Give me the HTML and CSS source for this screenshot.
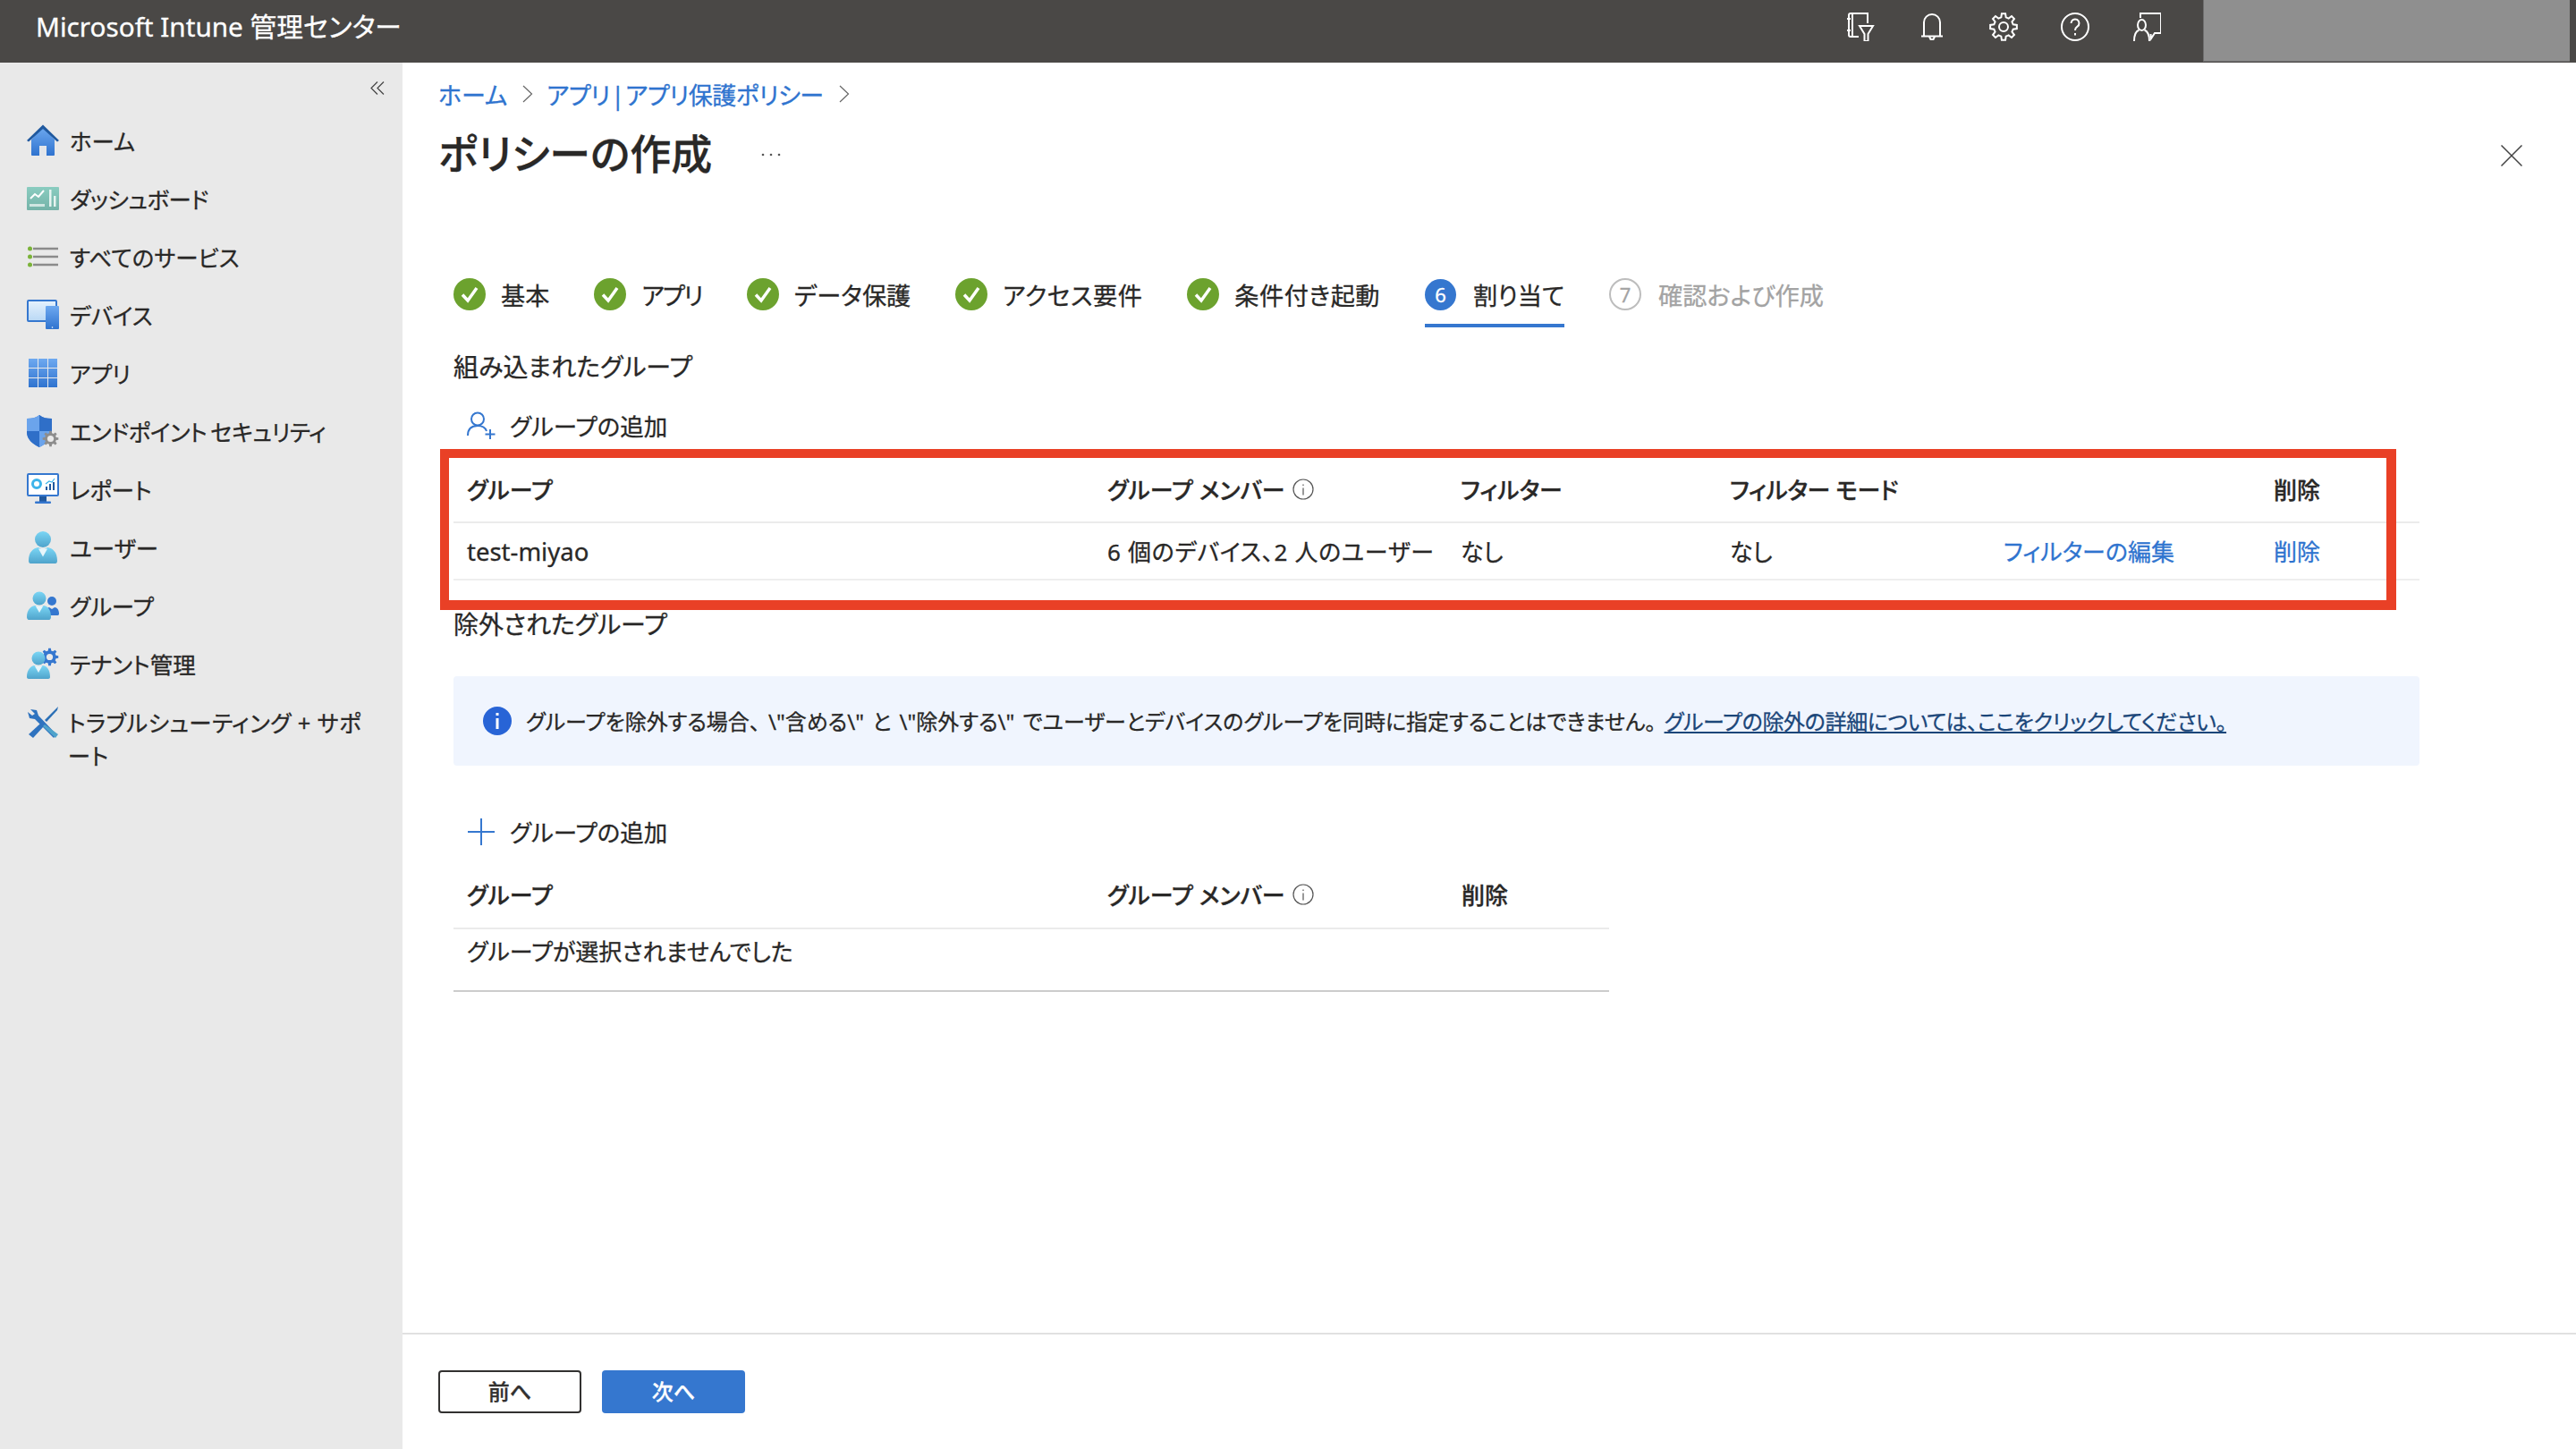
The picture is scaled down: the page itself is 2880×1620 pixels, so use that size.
FILE: index.html
```html
<!DOCTYPE html>
<html lang="ja">
<head>
<meta charset="utf-8">
<title>Microsoft Intune 管理センター</title>
<link rel="stylesheet" href="styles.css">
</head>
<body>
<header class="topbar">
  <div class="brand">Microsoft Intune 管理センター</div>
  <div class="top-icons">
    <svg class="top-icon" viewBox="0 0 32 32"><path d="M24 12V1H5a2 2 0 0 0-2 2v22a2 2 0 0 0 2 2h9M1 7h4M1 20h4M7 1v26M15 15h15l-5.500 9v8h-4v-8z"/></svg>
    <svg class="top-icon" viewBox="0 0 32 32"><path d="M7 26V11a9 9 0 0 1 18 0v15M4 26.500h24M13 27l1.500 3h3l1.500-3"/></svg>
    <svg class="top-icon" viewBox="0 0 32 32"><polygon points="13.34,5.33 13.91,1.15 18.09,1.15 18.66,5.33 21.67,6.57 25.03,4.02 27.98,6.97 25.43,10.33 26.67,13.34 30.85,13.91 30.85,18.09 26.67,18.66 25.43,21.67 27.98,25.03 25.03,27.98 21.67,25.43 18.66,26.67 18.09,30.85 13.91,30.85 13.34,26.67 10.33,25.43 6.97,27.98 4.02,25.03 6.57,21.67 5.33,18.66 1.15,18.09 1.15,13.91 5.33,13.34 6.57,10.33 4.02,6.97 6.97,4.02 10.33,6.57"/><circle cx="16" cy="16" r="5"/></svg>
    <svg class="top-icon" viewBox="0 0 32 32"><circle cx="16" cy="16" r="15"/><path d="M11.500 12a4.500 4.500 0 1 1 7 3.700c-1.800 1.200-2.500 2.200-2.500 4.300M16 23v2.500"/></svg>
    <svg class="top-icon" viewBox="0 0 32 32"><path d="M9 6V1h23v22h-7l-4 6-.5-5M2 32c0-7 1.500-11 5.500-12.500M19 32c0-7-1.500-11-5.500-12.500"/><ellipse cx="10.500" cy="14" rx="4.500" ry="6"/></svg>
  </div>
  <div class="account"></div>
</header>

<div class="shell">
  <nav class="sidebar">
    <div class="collapse">
      <svg class="collapse-icon" viewBox="0 0 16 15"><path d="M8 .5 1 7.500l7 7M15 .5l-7 7 7 7"/></svg>
    </div>
    <a class="nav-item">
      <svg class="nav-icon" viewBox="0 0 36 36">
        <defs>
          <linearGradient id="gBlue" x1="0" y1="0" x2="0" y2="1"><stop offset="0" stop-color="#6ea9f0"/><stop offset="1" stop-color="#2f73cf"/></linearGradient>
          <linearGradient id="gSky" x1="0" y1="0" x2="0" y2="1"><stop offset="0" stop-color="#7bd6f5"/><stop offset="1" stop-color="#4fa3cb"/></linearGradient>
          <linearGradient id="gScreen" x1="0" y1="0" x2="0" y2="1"><stop offset="0" stop-color="#e6f2fd"/><stop offset="1" stop-color="#b9d8f5"/></linearGradient>
          <linearGradient id="gTeal" x1="0" y1="0" x2="0" y2="1"><stop offset="0" stop-color="#8accc0"/><stop offset="1" stop-color="#74b3a8"/></linearGradient>
          <polygon id="gearShape" points="13.34,5.33 13.91,1.15 18.09,1.15 18.66,5.33 21.67,6.57 25.03,4.02 27.98,6.97 25.43,10.33 26.67,13.34 30.85,13.91 30.85,18.09 26.67,18.66 25.43,21.67 27.98,25.03 25.03,27.98 21.67,25.43 18.66,26.67 18.09,30.85 13.91,30.85 13.34,26.67 10.33,25.43 6.97,27.98 4.02,25.03 6.57,21.67 5.33,18.66 1.15,18.09 1.15,13.91 5.33,13.34 6.57,10.33 4.02,6.97 6.97,4.02 10.33,6.57"/>
        </defs>
        <path d="M5 17 18 3l13 14v17a1 1 0 0 1-1 1H6a1 1 0 0 1-1-1z" fill="url(#gBlue)"/>
        <path d="M0 18 18 .5 36 18l-2 1.500L18 5 2 19.500z" fill="#20599f"/>
        <rect x="14" y="24" width="8" height="11" fill="#e3e6ea"/>
      </svg>
      <span>ホーム</span>
    </a>
    <a class="nav-item nav-tight">
      <svg class="nav-icon" viewBox="0 0 36 36">
        <rect x="0" y="5" width="36" height="26" rx="1" fill="url(#gTeal)"/>
        <path d="M4 18l5-5 4 3 6-7" fill="none" stroke="#fff" stroke-width="2"/>
        <rect x="3" y="24" width="17" height="3" fill="#cfe6e1"/>
        <rect x="25" y="8" width="2.500" height="19" fill="#e6f3f0"/>
        <rect x="30" y="15" width="2.500" height="12" fill="#e6f3f0"/>
      </svg>
      <span>ダッシュボード</span>
    </a>
    <a class="nav-item">
      <svg class="nav-icon" viewBox="0 0 36 36">
        <path d="M7 9h28M7 18h28M7 27h28" stroke="#8b8b8b" stroke-width="2.400"/>
        <circle cx="3.500" cy="9" r="2.500" fill="#7bb339"/><circle cx="3.500" cy="18" r="2.500" fill="#7bb339"/><circle cx="3.500" cy="27" r="2.500" fill="#7bb339"/>
      </svg>
      <span>すべてのサービス</span>
    </a>
    <a class="nav-item">
      <svg class="nav-icon" viewBox="0 0 36 36">
        <rect x="1" y="2" width="32" height="23" rx="1" fill="url(#gScreen)" stroke="#3577cf" stroke-width="2"/>
        <rect x="21" y="8" width="15" height="26" rx="1" fill="url(#gBlue)"/>
        <circle cx="28.500" cy="32" r=".8" fill="#fff"/>
      </svg>
      <span>デバイス</span>
    </a>
    <a class="nav-item">
      <svg class="nav-icon" viewBox="0 0 36 36">
        <path d="M2 2h10v10H2zM13 2h10v10H13zM24 2h10v10H24zM2 13h10v10H2zM13 13h10v10H13zM24 13h10v10H24zM2 24h10v10H2zM13 24h10v10H13zM24 24h10v10H24z" fill="url(#gBlue)"/>
      </svg>
      <span>アプリ</span>
    </a>
    <a class="nav-item nav-tighter">
      <svg class="nav-icon" viewBox="0 0 36 36">
        <path d="M14 0c4 3 8 4 14 4v15c0 8-6 13-14 17C6 32 0 27 0 19V4c6 0 10-1 14-4z" fill="#3c7fd8"/>
        <path d="M14 0c4 3 8 4 14 4v14H14zM0 18h14v18C6 32 0 27 0 19z" fill="#2f6fc8"/>
        <path d="M14 0v18H0V4c6 0 10-1 14-4zM14 18h14c0 8-6 14-14 18z" fill="#6ba4ec"/>
        <svg x="17" y="17" width="19" height="19" viewBox="0 0 32 32"><use href="#gearShape" fill="#8d8d8d"/><circle cx="16" cy="16" r="6" fill="#e9e9e9"/></svg>
      </svg>
      <span>エンドポイント セキュリティ</span>
    </a>
    <a class="nav-item">
      <svg class="nav-icon" viewBox="0 0 36 36">
        <rect x="1" y="1" width="34" height="24" rx="1" fill="#fff" stroke="#3577cf" stroke-width="2"/>
        <rect x="14" y="26" width="8" height="6" fill="#20599f"/>
        <rect x="9" y="31.500" width="18" height="2.500" rx="1" fill="#3577cf"/>
        <circle cx="11" cy="12" r="4.500" fill="none" stroke="#3db4ea" stroke-width="3"/>
        <path d="M21 19v-4h2v4zM25 19v-7h2v7zM29 19v-9h2v9z" fill="#20599f"/>
        <path d="M21 12l4-3 3 1 3-4" fill="none" stroke="#3db4ea" stroke-width="1.200"/>
      </svg>
      <span>レポート</span>
    </a>
    <a class="nav-item">
      <svg class="nav-icon" viewBox="0 0 36 36">
        <circle cx="18" cy="9" r="9" fill="url(#gSky)"/>
        <path d="M2 33c0-10 5-14 11-15l5 3 5-3c6 1 11 5 11 15 0 2-1 3-2 3H4c-1 0-2-1-2-3z" fill="url(#gSky)"/>
        <path d="M13 19.500h10l-5 9z" fill="#e8f6fb"/>
      </svg>
      <span>ユーザー</span>
    </a>
    <a class="nav-item">
      <svg class="nav-icon" viewBox="0 0 36 36">
        <circle cx="28" cy="13" r="5" fill="#3577cf"/>
        <path d="M20 29c0-6 3-9 5-9l3 2 3-2c3 0 5 3 5 7 0 1-.5 2-1.500 2H20z" fill="#3577cf"/>
        <circle cx="14" cy="10" r="7.500" fill="url(#gSky)"/>
        <path d="M0 31c0-8 4-12 9-13l5 3 5-3c5 1 8 5 8 13 0 1-1 3-2 3H2c-1 0-2-2-2-3z" fill="url(#gSky)"/>
        <path d="M10 19h8l-4 7z" fill="#e8f6fb"/>
      </svg>
      <span>グループ</span>
    </a>
    <a class="nav-item">
      <svg class="nav-icon" viewBox="0 0 36 36">
        <svg x="15" y="0" width="21" height="21" viewBox="0 0 32 32"><use href="#gearShape" fill="#3577cf"/><circle cx="16" cy="16" r="5.500" fill="#e9e9e9"/></svg>
        <circle cx="13" cy="12" r="7.500" fill="url(#gSky)"/>
        <path d="M0 33c0-8 4-12 8-13l5 3 5-3c5 1 8 5 8 13 0 1-1 2-2 2H2c-1 0-2-1-2-2z" fill="url(#gSky)"/>
        <path d="M9 21h8l-4 7z" fill="#e8f6fb"/>
      </svg>
      <span>テナント管理</span>
    </a>
    <a class="nav-item nav-item-wrap">
      <svg class="nav-icon" viewBox="0 0 36 36">
        <path d="M4 3l7 1 2 6 20 21-3 4-21-21-6-1-2-7 5 4 3-2z" fill="#2f73bf"/>
        <path d="M35 0l-1 4-12 13-2-2z" fill="#2a6fb5"/>
        <path d="M15 19l4 3L7 35l-5-4z" fill="#2f73bf"/>
        <path d="M20 20 35 31l-3 4-14-13z" fill="#4fa3cb"/>
      </svg>
      <span>トラブルシューティング + サポ<br>ート</span>
    </a>
  </nav>

  <main class="main">
    <div class="main-body">
      <div class="crumbs">
        <a class="crumb">ホーム</a>
        <svg class="crumb-sep" viewBox="0 0 12 20"><path d="M1 1l9.500 9L1 19"/></svg>
        <a class="crumb crumb-pipe">アプリ | アプリ保護ポリシー</a>
        <svg class="crumb-sep" viewBox="0 0 12 20"><path d="M1 1l9.500 9L1 19"/></svg>
      </div>
      <div class="title-row">
        <h1 class="title">ポリシーの作成</h1>
        <svg class="more" viewBox="0 0 22 4"><circle cx="2" cy="2" r="1.300"/><circle cx="11" cy="2" r="1.300"/><circle cx="20" cy="2" r="1.300"/></svg>
        <svg class="close" viewBox="0 0 24 24"><path d="M.5.500l23 23M23.500.500l-23 23"/></svg>
      </div>

      <div class="wizard">
        <div class="steps">
          <div class="step"><svg class="step-check" viewBox="0 0 36 36"><circle cx="18" cy="18" r="18"/><path d="M10 18.500l6 6.500 10-14"/></svg><span>基本</span></div>
          <div class="step"><svg class="step-check" viewBox="0 0 36 36"><circle cx="18" cy="18" r="18"/><path d="M10 18.500l6 6.500 10-14"/></svg><span class="step-tight">アプリ</span></div>
          <div class="step"><svg class="step-check" viewBox="0 0 36 36"><circle cx="18" cy="18" r="18"/><path d="M10 18.500l6 6.500 10-14"/></svg><span>データ保護</span></div>
          <div class="step"><svg class="step-check" viewBox="0 0 36 36"><circle cx="18" cy="18" r="18"/><path d="M10 18.500l6 6.500 10-14"/></svg><span class="step-wide">アクセス要件</span></div>
          <div class="step"><svg class="step-check" viewBox="0 0 36 36"><circle cx="18" cy="18" r="18"/><path d="M10 18.500l6 6.500 10-14"/></svg><span class="step-wide">条件付き起動</span></div>
          <div class="step step-active"><span class="step-num">6</span><span>割り当て</span></div>
          <div class="step step-todo"><span class="step-num">7</span><span>確認および作成</span></div>
        </div>

        <h2 class="section-title section-first">組み込まれたグループ</h2>
        <div class="add-row">
          <svg class="add-icon" viewBox="0 0 32 32"><path d="M1 27c0-7 4-11 11-11s9 3 10 6"/><circle cx="12" cy="8.500" r="7"/><path d="M26 20v11M20.500 25.500h11"/></svg>
          <span class="add-label">グループの追加</span>
        </div>

        <div class="table table-included">
          <div class="tr th cols-6">
            <div>グループ</div>
            <div class="th-info">グループ メンバー<svg class="info" viewBox="0 0 24 24"><circle cx="12" cy="12" r="11"/><path d="M12 10.500v8M12 6.500v1.600"/></svg></div>
            <div>フィルター</div>
            <div class="th-mode">フィルター モード</div>
            <div></div>
            <div>削除</div>
          </div>
          <div class="tr td cols-6">
            <div class="td-name">test-miyao</div>
            <div class="td-members">6 個のデバイス、2 人のユーザー</div>
            <div>なし</div>
            <div>なし</div>
            <div><a class="link">フィルターの編集</a></div>
            <div><a class="link">削除</a></div>
          </div>
          <div class="callout"></div>
        </div>

        <h2 class="section-title section-second">除外されたグループ</h2>
        <div class="notice">
          <svg class="notice-icon" viewBox="0 0 32 32"><circle cx="16" cy="16" r="16"/><path d="M16 13v12M16 7v3"/></svg>
          <p class="notice-text">グループを除外する場合、 \"含める\" と \"除外する\" でユーザーとデバイスのグループを同時に指定することはできません。 <a class="notice-link">グループの除外の詳細については、ここをクリックしてください。</a></p>
        </div>
        <div class="add-row add-row-second">
          <svg class="add-icon" viewBox="0 0 32 32"><path d="M16 1v30M1 16h30"/></svg>
          <span class="add-label">グループの追加</span>
        </div>
        <div class="table table-excluded">
          <div class="tr th cols-3">
            <div>グループ</div>
            <div class="th-info">グループ メンバー<svg class="info" viewBox="0 0 24 24"><circle cx="12" cy="12" r="11"/><path d="M12 10.500v8M12 6.500v1.600"/></svg></div>
            <div>削除</div>
          </div>
          <div class="empty-row">グループが選択されませんでした</div>
        </div>
      </div>
    </div>

    <footer class="footer">
      <button class="btn btn-outline">前へ</button>
      <button class="btn btn-primary">次へ</button>
    </footer>
  </main>
</div>
</body>
</html>
```

FILE: styles.css
```css
* { box-sizing: border-box; }
html, body { margin: 0; padding: 0; }
body {
  width: 2880px;
  height: 1620px;
  overflow: hidden;
  background: #fff;
  color: #292827;
  font-family: "Noto Sans", "Noto Sans CJK JP", sans-serif;
  font-size: 26px;
  font-feature-settings: "palt";
  -webkit-text-stroke: .3px currentColor;
}
.topbar {
  height: 70px;
  display: flex;
  background: #4a4846;
  color: #fff;
}
.brand {
  height: 60px;
  line-height: 60px;
  padding-left: 40px;
  font-size: 29.700px;
  white-space: nowrap;
}
.top-icons {
  margin-left: auto;
  height: 60px;
  display: flex;
  align-items: center;
  gap: 48px;
}
.top-icon {
  width: 32px;
  height: 32px;
  fill: none;
  stroke: #fff;
  stroke-width: 2;
}
.account {
  width: 410px;
  margin: 0 7px 1px 47px;
  background: #8f8f8f;
  border-left: 1px solid #6e6e6e;
  border-bottom: 1px solid #6e6e6e;
}
.shell {
  height: 1550px;
  display: flex;
}
.sidebar {
  width: 450px;
  flex: none;
  background: #e9e9e9;
  font-size: 25.500px;
}
.collapse {
  height: 54px;
  display: flex;
  justify-content: flex-end;
  padding: 21px 20px 0 0;
}
.collapse-icon {
  width: 16px;
  height: 15px;
  fill: none;
  stroke: #444;
  stroke-width: 1.200;
}
.nav-item {
  height: 65px;
  display: flex;
  align-items: center;
  gap: 12px;
  padding-left: 30px;
  white-space: nowrap;
}
.nav-tight { letter-spacing: -.5px; }
.nav-tighter { letter-spacing: -.5px; word-spacing: -2px; }
.nav-icon {
  width: 36px;
  height: 36px;
  flex: none;
}
.nav-item-wrap {
  height: auto;
  align-items: flex-start;
  padding-top: 16px;
  line-height: 37px;
  gap: 10px;
  letter-spacing: .4px;
}
.main {
  flex: 1;
  display: flex;
  flex-direction: column;
  min-width: 0;
}
.main-body {
  flex: 1;
  padding-left: 40px;
}
.crumbs {
  margin-top: 15px;
  height: 40px;
  display: flex;
  align-items: center;
  font-size: 27px;
}
.crumb { color: #2f74cf; white-space: pre; }
.crumb-pipe {
  margin-left: -2px;
  letter-spacing: -.5px;
  word-spacing: -5px;
}
.crumb-sep {
  width: 12px;
  height: 20px;
  margin: 0 17px;
  fill: none;
  stroke: #666;
  stroke-width: 1.200;
}
.title-row {
  margin-top: 11px;
  height: 70px;
  display: flex;
  align-items: center;
  padding-right: 60px;
}
.title {
  margin: 0;
  font-size: 46px;
  font-weight: 500;
  line-height: 70px;
}
.more {
  width: 22px;
  height: 4px;
  margin: 3px 0 0 55px;
  fill: #555;
}
.close {
  width: 24px;
  height: 24px;
  margin: 6px 0 0 auto;
  fill: none;
  stroke: #444;
  stroke-width: 1.500;
}
.wizard { padding-left: 17px; }
.steps {
  margin-top: 90px;
  display: flex;
  gap: 50px;
  font-size: 27.200px;
}
.step {
  height: 70px;
  display: flex;
  align-items: center;
  gap: 17px;
  border-bottom: 4px solid transparent;
  white-space: nowrap;
}
.step-tight { letter-spacing: -1.700px; }
.step-wide { letter-spacing: .5px; }
.step-check { width: 36px; height: 36px; }
.step-check circle { fill: #6ca22e; }
.step-check path { fill: none; stroke: #fff; stroke-width: 3.500; }
.step-num {
  width: 35px;
  height: 35px;
  margin-right: 2px;
  border-radius: 50%;
  display: flex;
  align-items: center;
  justify-content: center;
  font-size: 22px;
}
.step-active { border-bottom-color: #3577cf; }
.step-active .step-num { background: #3577cf; color: #fff; }
.step-todo { color: #a3a3a3; }
.step-todo .step-num { width: 36px; height: 36px; border: 2px solid #bdbdbd; }
.section-title {
  margin: 0;
  height: 44px;
  line-height: 44px;
  font-size: 28px;
  font-weight: 400;
}
.section-first { margin-top: 22px; }
.section-second { margin-top: 27px; }
.add-row {
  margin-top: 19px;
  height: 50px;
  display: flex;
  align-items: center;
  gap: 16px;
  padding-left: 15px;
  font-size: 26.500px;
}
.add-label { padding-bottom: 2px; }
.add-row-second { margin-top: 49px; }
.add-icon {
  width: 32px;
  height: 32px;
  fill: none;
  stroke: #3577cf;
  stroke-width: 2;
}
.table { position: relative; }
.table-included { margin-top: 11px; width: 2198px; }
.table-excluded { margin-top: 8px; width: 1292px; }
.tr {
  display: grid;
  align-items: center;
  padding-left: 15px;
}
.cols-6 { grid-template-columns: 716px 395px 301px 306px 302px 1fr; }
.cols-3 { grid-template-columns: 716px 396px 1fr; }
.th {
  height: 73px;
  border-bottom: 2px solid #ebebeb;
  font-weight: 500;
}
.table-included .th { padding-bottom: 2px; }
.table-excluded .th { height: 76px; }
.th-mode { letter-spacing: -.4px; }
.td {
  height: 64px;
  border-bottom: 2px solid #eeeeee;
}
.td-name { font-size: 27.500px; }
.td-members { letter-spacing: .7px; }
.th-info {
  display: flex;
  align-items: center;
  gap: 8px;
}
.info {
  width: 24px;
  height: 24px;
  fill: none;
  stroke: #555;
  stroke-width: 1.200;
}
.link { color: #2f74cf; }
.callout {
  position: absolute;
  left: -15px;
  top: -10px;
  right: 26px;
  bottom: -33px;
  border: 10px solid #e94026;
  border-bottom-width: 11px;
  border-right-width: 11px;
}
.notice {
  margin: 36px 0 0;
  width: 2198px;
  height: 100px;
  display: flex;
  align-items: center;
  gap: 16px;
  padding-left: 33px;
  background: #f0f5fe;
  border-radius: 4px;
}
.notice-icon { width: 32px; height: 32px; flex: none; }
.notice-icon circle { fill: #2864d6; }
.notice-icon path { fill: none; stroke: #fff; stroke-width: 3; }
.notice-text {
  margin: 0;
  padding-bottom: 2px;
  font-size: 24px;
  word-spacing: 3px;
  white-space: nowrap;
}
.notice-link {
  color: #1b4679;
  letter-spacing: -.35px;
  text-decoration: underline;
}
.empty-row {
  height: 70px;
  padding: 7px 0 0 15px;
  line-height: 36px;
  border-bottom: 2px solid #cccccc;
}
.footer {
  height: 130px;
  flex: none;
  display: flex;
  gap: 23px;
  padding: 40px 0 0 40px;
  border-top: 2px solid #e1e1e1;
}
.btn {
  width: 160px;
  height: 48px;
  padding: 0 0 3px;
  border-radius: 4px;
  font-family: inherit;
  font-size: 24px;
  font-weight: 500;
  font-feature-settings: inherit;
}
.btn-outline { background: #fff; border: 2px solid #323130; color: #323130; }
.btn-primary { background: #3577cf; border: 0; color: #fff; }
```
